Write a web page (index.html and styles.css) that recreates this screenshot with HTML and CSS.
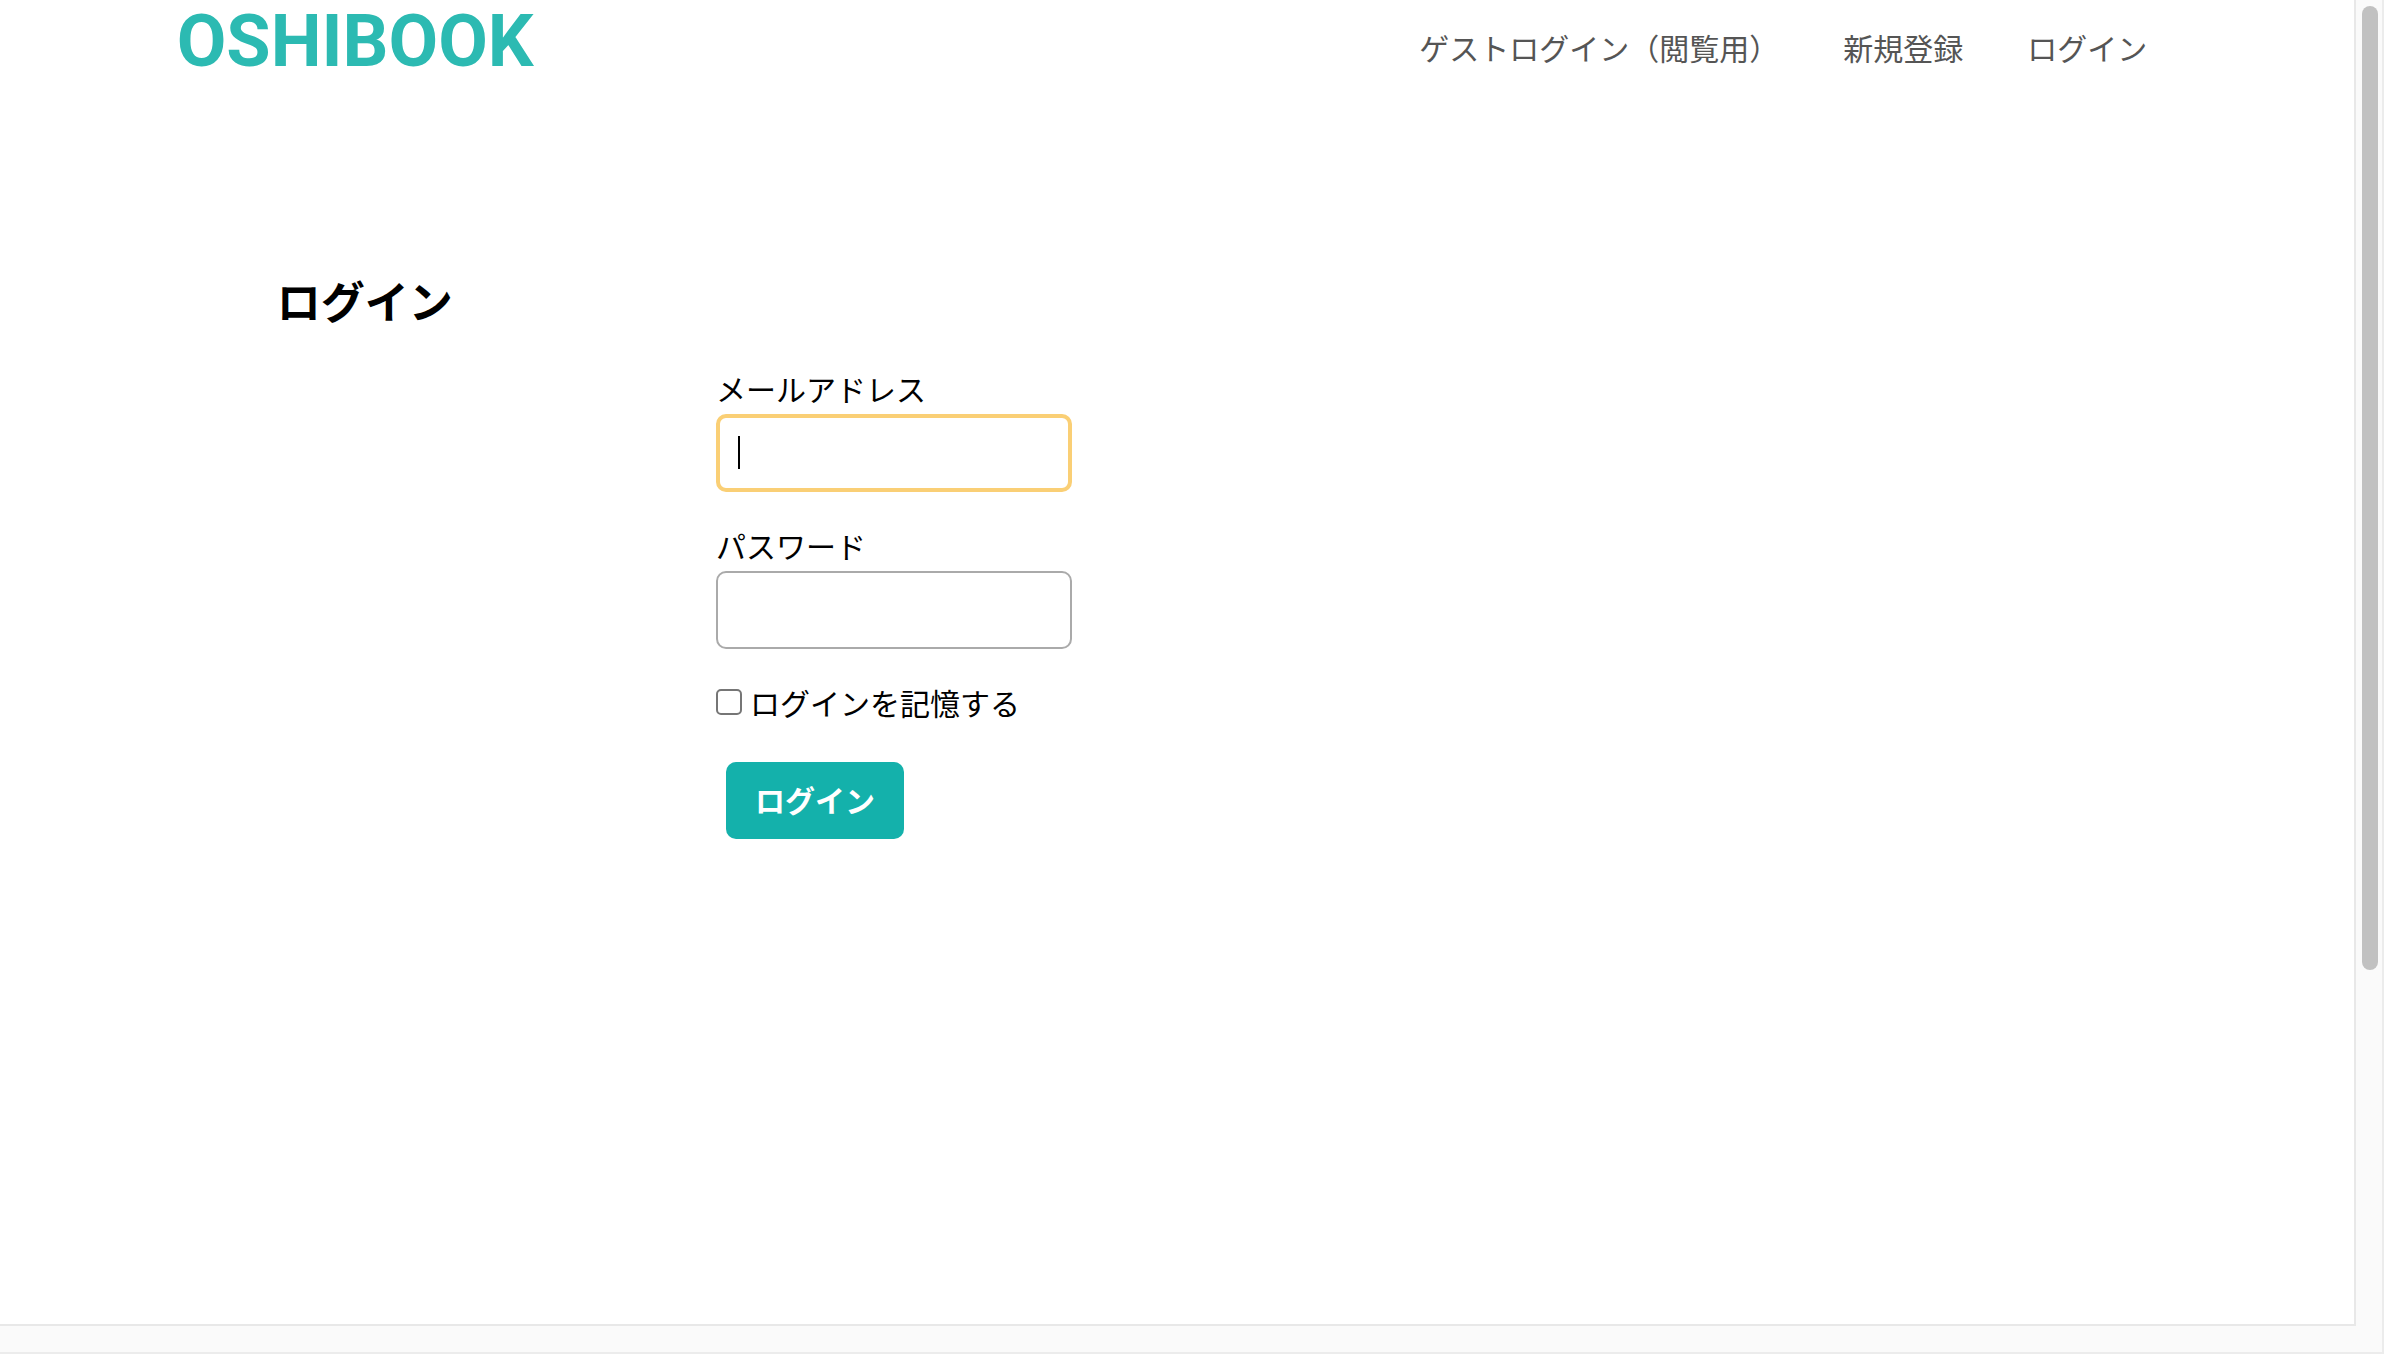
FILE: index.html
```html
<!DOCTYPE html>
<html lang="ja">
<head>
<meta charset="utf-8">
<meta name="viewport" content="width=device-width, initial-scale=1">
<title>OSHIBOOK</title>
<link rel="stylesheet" href="styles.css">
</head>
<body>
<div class="frame">
  <div class="page">
    <header class="header">
      <a class="logo" href="#">OSHIBOOK</a>
      <nav class="nav">
        <a class="nav-link" href="#">ゲストログイン（閲覧用）</a>
        <a class="nav-link" href="#">新規登録</a>
        <a class="nav-link" href="#">ログイン</a>
      </nav>
    </header>
    <main class="main">
      <h2 class="title">ログイン</h2>
      <form class="form">
        <div class="field">
          <label for="email">メールアドレス</label>
          <div class="control">
            <input class="input input-active" id="email" type="email">
            <span class="caret"></span>
          </div>
        </div>
        <div class="field">
          <label for="password">パスワード</label>
          <input class="input" id="password" type="password">
        </div>
        <div class="remember">
          <input class="checkbox" id="remember" type="checkbox">
          <label for="remember">ログインを記憶する</label>
        </div>
        <button class="submit" type="submit">ログイン</button>
      </form>
    </main>
  </div>
  <div class="track-y"><div class="thumb"></div></div>
</div>
</body>
</html>
```
FILE: styles.css
```css
* {
  box-sizing: border-box;
}

body {
  margin: 0;
  background: #fff;
  color: #000;
  font-family: "Noto Sans CJK JP", sans-serif;
  font-size: 30px;
  line-height: 44px;
}

.frame {
  display: grid;
  grid-template-columns: 1fr 26px;
  min-height: 100vh;
  padding-bottom: 26px;
  border-right: 2px solid #ececec;
  border-bottom: 2px solid #ececec;
  background: #fafafa;
}

.page {
  padding: 0 7.5%;
  border-right: 2px solid #e8e8e8;
  border-bottom: 2px solid #e8e8e8;
  background: #fff;
}

.header {
  display: flex;
  justify-content: space-between;
  height: 100px;
}

.logo {
  color: #2cbab2;
  font-family: Roboto, sans-serif;
  font-size: 72px;
  font-weight: bold;
  line-height: 84px;
  text-decoration: none;
}

.nav {
  display: flex;
  gap: 64px;
  padding: 25px 30px 0 0;
}

.nav-link {
  color: #555;
  text-decoration: none;
}

.main {
  padding: 166px 5% 60px;
}

.title {
  margin: 0 0 32px;
  font-size: 44px;
  font-weight: bold;
  line-height: 68px;
}

.form {
  display: flex;
  flex-direction: column;
  align-items: flex-start;
  gap: 31px;
  margin-left: 24.4%;
}

.field {
  display: flex;
  flex-direction: column;
  gap: 4px;
}

.control {
  position: relative;
}

.input {
  display: block;
  width: 356px;
  height: 78px;
  padding: 0 20px;
  border: 2px solid #aaa;
  border-radius: 10px;
  outline: none;
  background: #fff;
  font: inherit;
}

.input-active {
  border: 4px solid #facf75;
}

.caret {
  position: absolute;
  top: 22px;
  left: 22px;
  width: 2px;
  height: 33px;
  background: #000;
}

.remember {
  display: flex;
  align-items: center;
  gap: 8px;
}

.checkbox {
  appearance: none;
  width: 26px;
  height: 26px;
  margin: 0;
  border: 2px solid #767676;
  border-radius: 5px;
  background: #fff;
}

.submit {
  margin: 7px 0 0 10px;
  padding: 15px 29px 18px;
  border: 0;
  border-radius: 10px;
  background: #14b1ab;
  color: #fff;
  font: inherit;
  font-weight: bold;
}

.track-y {
  padding: 6px 4px 0 6px;
}

.thumb {
  height: 73%;
  border-radius: 8px;
  background: #c1c1c1;
}
```
